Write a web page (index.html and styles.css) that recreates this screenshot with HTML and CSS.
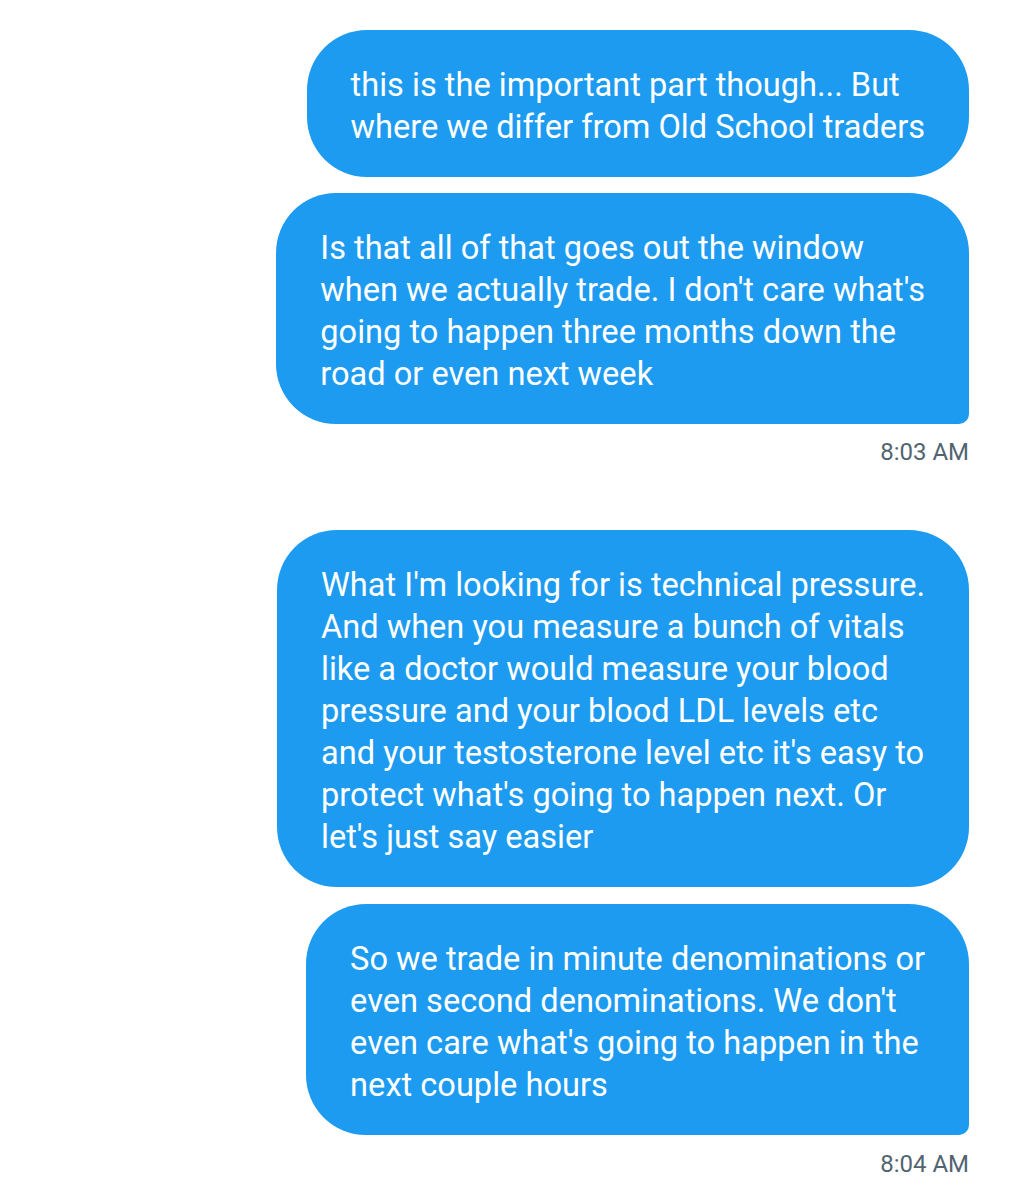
FILE: index.html
```html
<!DOCTYPE html>
<html lang="en">
<head>
<meta charset="utf-8">
<title>Messages</title>
<link rel="stylesheet" href="styles.css">
</head>
<body>
<main class="thread">
  <div class="group">
    <div class="bubble b1">this is the important part though... But<br>where we differ from Old School traders</div>
    <div class="bubble b2 last">Is that all of that goes out the window<br>when we actually trade. I don't care what's<br>going to happen three months down the<br>road or even next week</div>
    <div class="time t1">8:03 AM</div>
  </div>
  <div class="group g2">
    <div class="bubble b3">What I'm looking for is technical pressure.<br>And when you measure a bunch of vitals<br>like a doctor would measure your blood<br>pressure and your blood LDL levels etc<br>and your testosterone level etc it's easy to<br>protect what's going to happen next. Or<br>let's just say easier</div>
    <div class="bubble b4 last">So we trade in minute denominations or<br>even second denominations. We don't<br>even care what's going to happen in the<br>next couple hours</div>
    <div class="time t2">8:04 AM</div>
  </div>
</main>
</body>
</html>
```
FILE: styles.css
```css
html, body {
  margin: 0;
  padding: 0;
  background: #ffffff;
}
body {
  font-family: Roboto, "Noto Sans", "Liberation Sans", sans-serif;
}
.thread {
  display: flex;
  flex-direction: column;
  padding: 30px 42px 0 0;
}
.group {
  display: flex;
  flex-direction: column;
  align-items: flex-end;
  gap: 16px;
}
.g2 {
  margin-top: 65px;
  gap: 17px;
}
.bubble {
  background: #1d9bf0;
  color: #ffffff;
  font-size: 32.6px;
  line-height: 42px;
  padding: 34px 44px 29px 44px;
  border-radius: 60px;
  white-space: nowrap;
  box-sizing: border-box;
}
.bubble.last {
  border-bottom-right-radius: 10px;
}
.time {
  color: #536471;
  font-size: 24px;
  line-height: 26px;
  margin-top: -1px;
}
```
